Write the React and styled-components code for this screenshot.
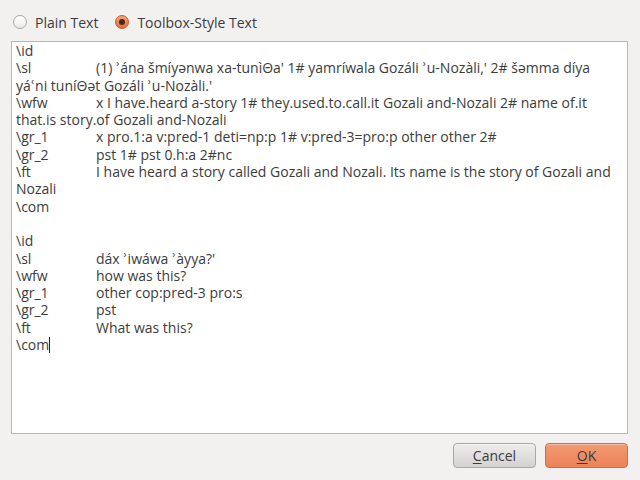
import React from 'react';
import styled, { createGlobalStyle } from 'styled-components';

const Global = createGlobalStyle`
  html, body {
    margin: 0;
    padding: 0;
    background: #f2f1f0;
  }
  body {
    font-family: 'Open Sans', 'DejaVu Sans', sans-serif;
    color: #3c3c3c;
  }
`;

const Dialog = styled.div`
  width: 640px;
  height: 480px;
  box-sizing: border-box;
  padding: 12px 12px 12px 11px;
  display: flex;
  flex-direction: column;
  background: #f2f1f0;
`;

const RadioRow = styled.div`
  display: flex;
  align-items: center;
  gap: 17px;
  height: 20px;
  padding-left: 2px;
  margin-bottom: 9px;
  font-size: 14px;
`;

const RadioOption = styled.label`
  display: flex;
  align-items: center;
  gap: 8px;
`;

const RadioDot = styled.span`
  width: 14px;
  height: 14px;
  border-radius: 50%;
  box-sizing: border-box;
  display: flex;
  align-items: center;
  justify-content: center;
  border: 1px solid ${({ $on }) => ($on ? '#c8582e' : '#a8a49e')};
  background: ${({ $on }) =>
    $on
      ? 'linear-gradient(#f7a47f, #e86a3a)'
      : 'linear-gradient(#ffffff, #ecebe9)'};
  &::after {
    content: '';
    display: ${({ $on }) => ($on ? 'block' : 'none')};
    width: 6px;
    height: 6px;
    border-radius: 50%;
    background: #4a2a1c;
  }
`;

const Editor = styled.div`
  flex: 1;
  background: #fff;
  border: 1px solid #bcb8b1;
  padding: 0 4px;
  font-size: 14px;
  line-height: 17.3px;
  overflow: hidden;
`;

const Line = styled.div`
  white-space: nowrap;
  height: 17.3px;
`;

const Marker = styled.span`
  display: inline-block;
  width: 80px;
`;

const Caret = styled.span`
  display: inline-block;
  width: 1px;
  height: 16px;
  background: #222;
  vertical-align: -3px;
`;

const Footer = styled.div`
  display: flex;
  justify-content: flex-end;
  gap: 9px;
  margin-top: 9px;
`;

const Button = styled.button`
  width: 83px;
  height: 25px;
  border-radius: 4px;
  font-family: inherit;
  font-size: 14px;
  color: #3c3c3c;
  padding: 0;
  border: 1px solid ${({ $primary }) => ($primary ? '#d26a42' : '#a9a7a3')};
  background: ${({ $primary }) =>
    $primary
      ? 'linear-gradient(#f39a74, #ec8257)'
      : 'linear-gradient(#eeedec, #d3d2d0)'};
  box-shadow: inset 0 1px 0 rgba(255, 255, 255, 0.35);
  u {
    text-decoration: underline;
    text-underline-offset: 2px;
  }
`;

const records = [
  ['\\id', ''],
  ['\\sl', "(1) ʾána šmíyənwa xa-tunìΘa' 1# yamríwala Gozáli ʾu-Nozàli,' 2# šəmma díya"],
  [null, "yáʿni tuníΘət Gozáli ʾu-Nozàli.'"],
  ['\\wfw', 'x I have.heard a-story 1# they.used.to.call.it Gozali and-Nozali 2# name of.it'],
  [null, 'that.is story.of Gozali and-Nozali'],
  ['\\gr_1', 'x pro.1:a v:pred-1 deti=np:p 1# v:pred-3=pro:p other other 2#'],
  ['\\gr_2', 'pst 1# pst 0.h:a 2#nc'],
  ['\\ft', 'I have heard a story called Gozali and Nozali. Its name is the story of Gozali and'],
  [null, 'Nozali'],
  ['\\com', ''],
  [null, ''],
  ['\\id', ''],
  ['\\sl', "dáx ʾiwáwa ʾàyya?'"],
  ['\\wfw', 'how was this?'],
  ['\\gr_1', 'other cop:pred-3 pro:s'],
  ['\\gr_2', 'pst'],
  ['\\ft', 'What was this?'],
];

export default function App() {
  return (
    <>
      <Global />
      <Dialog>
        <RadioRow>
          <RadioOption>
            <RadioDot />
            Plain Text
          </RadioOption>
          <RadioOption>
            <RadioDot $on />
            Toolbox-Style Text
          </RadioOption>
        </RadioRow>
        <Editor>
          {records.map(([marker, text], i) => (
            <Line key={i}>
              {marker === null ? text : text ? <><Marker>{marker}</Marker>{text}</> : marker}
            </Line>
          ))}
          <Line>
            \com
            <Caret />
          </Line>
        </Editor>
        <Footer>
          <Button>
            <u>C</u>ancel
          </Button>
          <Button $primary>
            <u>O</u>K
          </Button>
        </Footer>
      </Dialog>
    </>
  );
}
